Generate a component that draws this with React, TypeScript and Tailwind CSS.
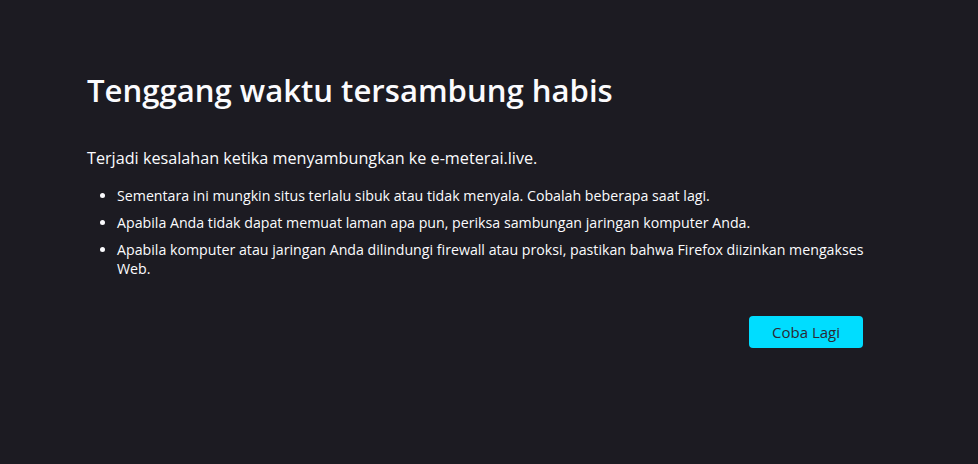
import React from "react";

export default function App() {
  const tips = [
    "Sementara ini mungkin situs terlalu sibuk atau tidak menyala. Cobalah beberapa saat lagi.",
    "Apabila Anda tidak dapat memuat laman apa pun, periksa sambungan jaringan komputer Anda.",
    "Apabila komputer atau jaringan Anda dilindungi firewall atau proksi, pastikan bahwa Firefox diizinkan mengakses Web.",
  ];

  return (
    <div className="min-h-screen w-full bg-[#1c1b22] text-[#fbfbfe] font-['Open_Sans',sans-serif]">
      <div className="pl-[87px] pt-[68px]">
        <div className="w-[776px]">
          {/* Heading */}
          <h1 className="text-[31.1px] leading-[44px] font-semibold">
            Tenggang waktu tersambung habis
          </h1>

          {/* Short description */}
          <p className="mt-[34px] text-[16.2px] leading-[24px]">
            Terjadi kesalahan ketika menyambungkan ke e-meterai.live.
          </p>

          {/* Suggestions */}
          <ul className="mt-[16px] -mr-[20px] pl-[30px] list-disc text-[14.2px] leading-[19px]">
            {tips.map((tip, idx) => (
              <li key={idx} className="mb-[8px]">
                {tip}
              </li>
            ))}
          </ul>

          {/* Try again button */}
          <div className="flex justify-end mt-[38px]">
            <button className="w-[114px] h-[32px] rounded-[4px] bg-[#00ddff] text-[#2b2a33] text-[15px] font-normal">
              Coba Lagi
            </button>
          </div>
        </div>
      </div>
    </div>
  );
}
